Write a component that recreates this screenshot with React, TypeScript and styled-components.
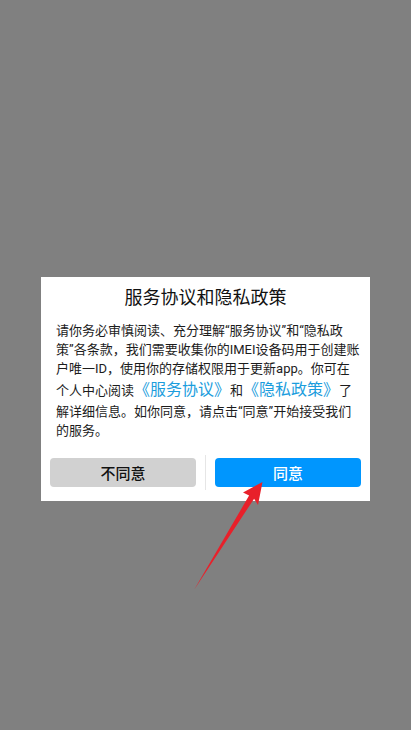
import React from "react";
import styled, { createGlobalStyle } from "styled-components";

const Global = createGlobalStyle`
  html, body { margin: 0; padding: 0; background: #808080; }
  body { font-family: Roboto, "Noto Sans CJK SC", sans-serif; }
`;

const Page = styled.div`
  position: relative;
  width: 411px;
  height: 730px;
  box-sizing: border-box;
  padding: 277px 41px 0;
  background: #808080;
  overflow: hidden;
`;

const Dialog = styled.div`
  background: #ffffff;
  box-sizing: border-box;
  height: 224px;
  padding: 9px 0 0;
  display: flex;
  flex-direction: column;
`;

const Title = styled.h1`
  margin: 0;
  font-size: 18px;
  line-height: 24px;
  font-weight: 400;
  color: #111;
  text-align: center;
`;

const Body = styled.p`
  margin: 11px 0 0;
  padding: 0 9px 0 15px;
  font-size: 13px;
  line-height: 19px;
  color: #1c1c1c;
`;

const Link = styled.span`
  display: inline-block;
  font-size: 16px;
  line-height: 20px;
  margin: 2px 0;
  color: #1b9ddd;
`;

const Actions = styled.div`
  margin-top: auto;
  margin-bottom: 11px;
  padding: 0 9px;
  display: grid;
  grid-template-columns: 1fr 1px 1fr;
  column-gap: 9px;
  align-items: center;
  height: 35px;
`;

const Divider = styled.div`
  height: 35px;
  background: #e6e6e6;
`;

const Button = styled.button<{ $primary?: boolean }>`
  height: 29px;
  border: none;
  border-radius: 4px;
  padding: 0;
  font-family: Roboto, "Noto Sans CJK SC", sans-serif;
  font-size: 15px;
  font-weight: 500;
  background: ${(p) => (p.$primary ? "#0096fe" : "#d1d1d1")};
  color: ${(p) => (p.$primary ? "#ffffff" : "#111111")};
`;

const Arrow = styled.svg`
  position: absolute;
  left: 190px;
  top: 478px;
`;

export default function App() {
  return (
    <>
      <Global />
      <Page>
        <Dialog>
          <Title>服务协议和隐私政策</Title>
          <Body>
            请你务必审慎阅读、充分理解“服务协议”和“隐私政策”各条款，我们需要收集你的IMEI设备码用于创建账户唯一ID，使用你的存储权限用于更新app。你可在个人中心阅读
            <Link>《服务协议》</Link>和<Link>《隐私政策》</Link>
            了解详细信息。如你同意，请点击“同意”开始接受我们的服务。
          </Body>
          <Actions>
            <Button>不同意</Button>
            <Divider />
            <Button $primary>同意</Button>
          </Actions>
        </Dialog>
        <Arrow width="80" height="118" viewBox="0 0 80 118">
          <polygon
            points="72.5,4 68,27 64.1,20.7 4,112 59.1,17.5 53,14.5"
            fill="#e8202a"
          />
        </Arrow>
      </Page>
    </>
  );
}
